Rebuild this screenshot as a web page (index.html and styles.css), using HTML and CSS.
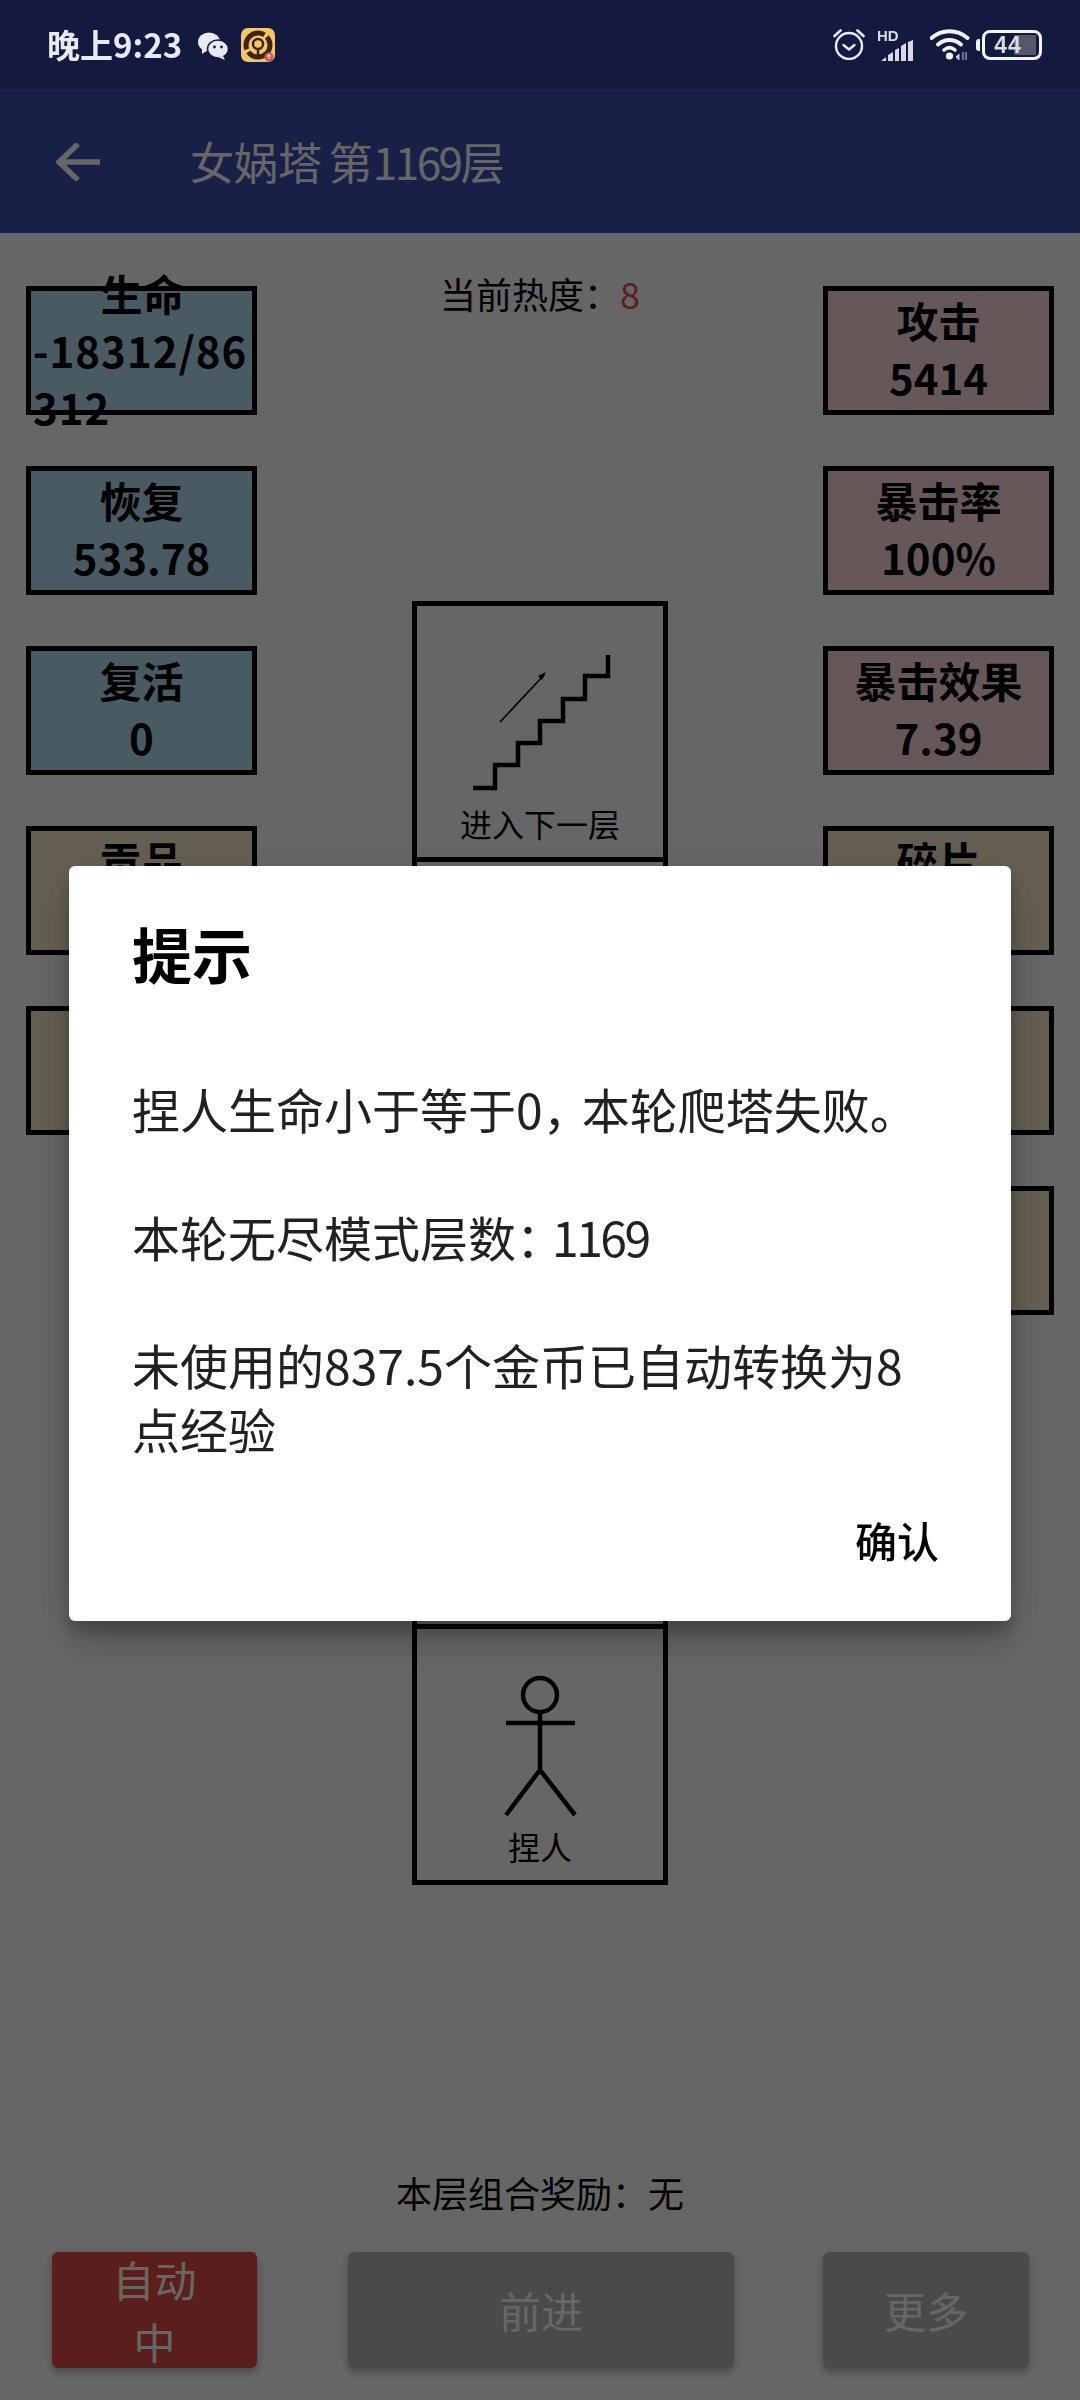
FILE: index.html
```html
<!DOCTYPE html>
<html lang="zh-CN">
<head>
    <meta charset="UTF-8">
    <meta name="viewport" content="width=device-width, initial-scale=1.0">
    <title>女娲塔</title>
    <link rel="stylesheet" href="styles.css">
</head>
<body>
    <div class="page">
        <div class="status-bar">
            <div class="status-content">
                <div class="status-left">
                    <span class="status-time">晚上9:23</span>
                    <svg class="icon-wechat" width="32" height="28" viewBox="0 0 32 28">
                        <ellipse cx="12" cy="10" rx="11" ry="9.5" fill="#e8eaf2"/>
                        <path d="M5 16 L5 22 L11 18 Z" fill="#e8eaf2"/>
                        <ellipse cx="21" cy="17" rx="10.5" ry="9" fill="#e8eaf2" stroke="#131940" stroke-width="1.5"/>
                        <path d="M26 24 L28 28 L21 25 Z" fill="#e8eaf2"/>
                        <circle cx="17.5" cy="15" r="1.4" fill="#131940"/>
                        <circle cx="24.5" cy="15" r="1.4" fill="#131940"/>
                    </svg>
                    <svg class="icon-app" width="34" height="34" viewBox="0 0 34 34">
                        <rect width="34" height="34" rx="7" fill="#f7c766"/>
                        <circle cx="17" cy="17" r="12" fill="none" stroke="#3d2410" stroke-width="5" stroke-dasharray="30 3"/>
                        <circle cx="17" cy="16" r="5" fill="none" stroke="#3d2410" stroke-width="2.5"/>
                        <path d="M17 21 V27" stroke="#3d2410" stroke-width="2.5"/>
                        <circle cx="28" cy="29" r="4.5" fill="#c9574a"/>
                        <path d="M28 26.5 V31 M26 28.5 L28 26.5 L30 28.5" stroke="#fff" stroke-width="1" fill="none"/>
                    </svg>
                </div>
                <div class="status-right">
                    <svg class="icon-alarm" width="32" height="32" viewBox="0 0 32 32">
                        <circle cx="16" cy="18" r="13" fill="none" stroke="#e8eaf2" stroke-width="2.4"/>
                        <path d="M10.5 17 L16 21.5 L21.5 17" fill="none" stroke="#e8eaf2" stroke-width="2.4" stroke-linecap="round" stroke-linejoin="round"/>
                        <path d="M1.5 8 L7.5 2.5 M30.5 8 L24.5 2.5" stroke="#e8eaf2" stroke-width="2.6" stroke-linecap="round"/>
                    </svg>
                    <div class="signal">
                        <span class="signal-hd">HD</span>
                        <svg class="signal-bars" width="32" height="21" viewBox="0 0 32 21">
                            <path d="M0 21 L5 17 V21 Z M7 21 V15 L12 12 V21 Z M14 21 V10 L18 8 V21 Z M20 21 V6 L25 3 V21 Z M27 21 V2 L32 0 V21 Z" fill="#d8dae4"/>
                        </svg>
                    </div>
                    <svg class="icon-wifi" width="40" height="32" viewBox="0 0 40 32">
                        <path d="M1.5 9 C12 0 27 0 37.5 9" fill="none" stroke="#f2f3f8" stroke-width="4" stroke-linecap="round"/>
                        <path d="M8 15.5 C15 9.5 24 9.5 31 15.5" fill="none" stroke="#f2f3f8" stroke-width="4" stroke-linecap="round"/>
                        <path d="M14 21 C17.5 18 21.5 18 25 21" fill="none" stroke="#f2f3f8" stroke-width="3.5" stroke-linecap="round"/>
                        <circle cx="19.5" cy="27" r="3.6" fill="#f2f3f8"/>
                        <path d="M29 25 L26 28 L29 31 Z M33 23 V31 M36 23 V31" fill="#c9ccd8" stroke="#c9ccd8" stroke-width="1"/>
                    </svg>
                    <div class="battery">
                        <span class="battery-cap"></span>
                        <div class="battery-body">
                            <span class="battery-fill"></span>
                            <span class="battery-text">44</span>
                        </div>
                    </div>
                </div>
            </div>
        </div>

        <div class="app-bar">
            <svg class="back-icon" width="44" height="38" viewBox="0 0 44 38">
                <path d="M44 19 H3 M22 1 L3 19 L22 37" fill="none" stroke="#fff" stroke-width="5.5"/>
            </svg>
            <span class="app-title">女娲塔 第<span class="narrow-num">1169</span>层</span>
        </div>

        <div class="main">
            <div class="stat-col">
                <div class="stat stat-blue stat-wide">
                    <div>生命</div>
                    <div class="stat-long">-18312/86312</div>
                </div>
                <div class="stat stat-blue">
                    <div>恢复</div>
                    <div>533.78</div>
                </div>
                <div class="stat stat-blue">
                    <div>复活</div>
                    <div>0</div>
                </div>
                <div class="stat stat-tan">
                    <div>贡品</div>
                    <div>0</div>
                </div>
                <div class="stat stat-tan"></div>
            </div>

            <div class="center-col">
                <div class="heat">当前热度：<span class="heat-value">8</span></div>
                <div class="tile">
                    <svg class="tile-icon" width="150" height="150" viewBox="0 0 150 150">
                        <path d="M8 138 H30 V115 H53 V93 H75 V71 H98 V49 H120 V26 H143 V5" fill="none" stroke="#000" stroke-width="4.5"/>
                        <path d="M35 72 L79 25" fill="none" stroke="#000" stroke-width="1.6"/>
                        <path d="M81 22 L73 26 L77 30 Z" fill="#000"/>
                    </svg>
                    <div class="tile-label">进入下一层</div>
                </div>
                <div class="tile"></div>
                <div class="tile"></div>
                <div class="tile"></div>
                <div class="tile">
                    <svg class="tile-icon" width="150" height="150" viewBox="0 0 150 150">
                        <circle cx="75" cy="22" r="17" fill="none" stroke="#000" stroke-width="4.5"/>
                        <path d="M75 39 V97 M41 50 H110 M75 97 L41 142 M75 97 L110 142" fill="none" stroke="#000" stroke-width="4.5"/>
                    </svg>
                    <div class="tile-label">捏人</div>
                </div>
            </div>

            <div class="stat-col">
                <div class="stat stat-red">
                    <div>攻击</div>
                    <div>5414</div>
                </div>
                <div class="stat stat-red">
                    <div>暴击率</div>
                    <div>100%</div>
                </div>
                <div class="stat stat-red">
                    <div>暴击效果</div>
                    <div>7.39</div>
                </div>
                <div class="stat stat-tan">
                    <div>碎片</div>
                    <div>0</div>
                </div>
                <div class="stat stat-tan"></div>
                <div class="stat stat-tan"></div>
            </div>
        </div>

        <div class="footer">
            <div class="combo">本层组合奖励：无</div>
            <div class="actions">
                <button class="btn btn-auto">自动中</button>
                <button class="btn btn-next">前进</button>
                <button class="btn btn-more">更多</button>
            </div>
        </div>
    </div>

    <!-- 提示 dialog -->
    <div class="overlay">
        <div class="dialog">
            <div class="dialog-title">提示</div>
            <div class="dialog-text">
                捏人生命小于等于0<span class="tight-comma">，</span>本轮爬塔失败。<br><br>
                本轮无尽模式层数<span class="tight-colon">：</span><span class="narrow-num">1169</span><br><br>
                未使用的837.5个金币已自动转换为8点经验
            </div>
            <div class="dialog-actions">
                <button class="dialog-btn">确认</button>
            </div>
        </div>
    </div>
</body>
</html>
```

FILE: styles.css
```css
* {
    box-sizing: border-box;
}

body {
    font-family: "Noto Sans CJK SC", "Noto Sans", sans-serif;
    margin: 0;
    padding: 0;
    background-color: #fff;
    color: #000;
}

button {
    font-family: inherit;
    border: none;
    padding: 0;
    background: none;
}

.page {
    display: flex;
    flex-direction: column;
    height: 2400px;
    overflow: hidden;
}

/* Status bar */
.status-bar {
    height: 89px;
    flex-shrink: 0;
    background-color: #303f9f;
}

.status-content {
    position: relative;
    z-index: 3;
    display: flex;
    justify-content: space-between;
    height: 89px;
    padding: 28px 38px 0 47px;
}

.status-left {
    display: flex;
    align-items: flex-start;
}

.status-time {
    font-size: 33px;
    line-height: 32px;
    font-weight: 700;
    color: #e8eaf2;
}

.icon-wechat {
    margin: 4px 0 0 15px;
}

.icon-app {
    margin-left: 12px;
}

.status-right {
    display: flex;
    align-items: flex-start;
}

.signal {
    position: relative;
    width: 36px;
    height: 28px;
    margin: 2px 0 0 12px;
}

.signal-hd {
    position: absolute;
    left: 0;
    top: -1px;
    font-family: "Liberation Sans", sans-serif;
    font-size: 15px;
    line-height: 13px;
    font-weight: 700;
    color: #d8dae4;
}

.signal-bars {
    position: absolute;
    right: 0;
    bottom: -3px;
}

.icon-wifi {
    margin: 1px 0 0 17px;
}

.battery {
    display: flex;
    align-items: center;
    height: 30px;
    margin: 2px 0 0 6px;
}

.battery-cap {
    width: 4px;
    height: 12px;
    margin-right: 2px;
    border-radius: 3px 0 0 3px;
    background-color: #f2f3f8;
}

.battery-body {
    position: relative;
    display: flex;
    align-items: center;
    justify-content: center;
    width: 60px;
    height: 30px;
    border: 3px solid #f2f3f8;
    border-radius: 8px;
}

.battery-fill {
    position: absolute;
    left: 29px;
    top: 2px;
    bottom: 2px;
    right: 3px;
    background-color: #55586a;
}

.battery-text {
    position: relative;
    font-family: "Liberation Sans", sans-serif;
    font-size: 23px;
    line-height: 24px;
    font-weight: 700;
    letter-spacing: 1px;
    margin-right: 8px;
    color: #d9dbe6;
}

/* App bar */
.app-bar {
    display: flex;
    align-items: center;
    height: 144px;
    flex-shrink: 0;
    padding-left: 56px;
    background-color: #3f51b5;
    color: #fff;
}

.back-icon {
    margin: 2px 90px 0 0;
}

.app-title {
    font-size: 44px;
    word-spacing: -3px;
}

.narrow-num {
    letter-spacing: -2.5px;
}

/* Main area */
.main {
    display: flex;
    justify-content: space-between;
    flex: 1;
    min-height: 0;
    padding: 0 26px;
}

.stat-col {
    display: flex;
    flex-direction: column;
    gap: 51px;
    width: 231px;
    padding-top: 53px;
}

.stat {
    display: flex;
    flex-direction: column;
    justify-content: center;
    height: 129px;
    padding: 0 3px 6px;
    border: 5px solid #000;
    font-size: 42px;
    line-height: 57px;
    font-weight: 700;
    text-align: center;
}

.stat-wide {
    padding: 0 0 2px 2px;
}

.stat-long {
    text-align: left;
    word-break: break-all;
    letter-spacing: 1px;
}

.stat-blue {
    background-color: #b9e1f7;
}

.stat-red {
    background-color: #ffdcdc;
}

.stat-tan {
    background-color: #fdedcd;
}

.center-col {
    display: flex;
    flex-direction: column;
    align-items: center;
    width: 256px;
    padding-top: 35px;
}

.heat {
    font-size: 36px;
    line-height: 50px;
    margin-bottom: 283px;
    white-space: nowrap;
}

.heat-value {
    color: #d9534a;
}

.tile {
    display: flex;
    flex-direction: column;
    align-items: center;
    width: 256px;
    height: 261px;
    flex-shrink: 0;
    margin-bottom: -5.25px;
    padding-top: 44px;
    border: 5px solid #000;
}

.tile-label {
    margin-top: 1px;
    font-size: 32px;
    line-height: 44px;
}

/* Footer */
.footer {
    flex-shrink: 0;
    padding-bottom: 32px;
}

.combo {
    font-size: 36px;
    line-height: 50px;
    text-align: center;
    margin-bottom: 35px;
}

.actions {
    display: flex;
    padding-left: 52px;
}

.btn {
    height: 116px;
    padding: 0 48px;
    border-radius: 6px;
    font-size: 42px;
    line-height: 62px;
    color: #fff;
    background-color: #bababa;
    box-shadow: 0 4px 8px rgba(0, 0, 0, 0.3);
}

.btn-auto {
    display: flex;
    align-items: center;
    justify-content: center;
    width: 205px;
    background-color: #e14e46;
}

.btn-next {
    width: 386px;
    margin-left: 91px;
}

.btn-more {
    width: 206px;
    margin-left: 89px;
}

/* Dialog */
.overlay {
    position: fixed;
    z-index: 2;
    left: 0;
    top: 0;
    display: flex;
    align-items: center;
    justify-content: center;
    width: 100%;
    height: 2400px;
    padding-top: 87px;
    background-color: rgba(0, 0, 0, 0.6);
}

.dialog {
    width: 942px;
    padding: 45px 65px 39px 63px;
    background-color: #fff;
    border-radius: 6px;
    box-shadow: 0 24px 38px rgba(0, 0, 0, 0.14), 0 9px 46px rgba(0, 0, 0, 0.12), 0 11px 15px rgba(0, 0, 0, 0.2);
}

.dialog-title {
    font-size: 60px;
    line-height: 84px;
    font-weight: 700;
    margin-bottom: 81px;
}

.dialog-text {
    font-size: 48px;
    line-height: 64px;
    color: #212121;
}

.tight-comma {
    letter-spacing: -9px;
}

.tight-colon {
    letter-spacing: -12px;
}

.dialog-actions {
    display: flex;
    justify-content: flex-end;
    margin-top: 38px;
}

.dialog-btn {
    margin-right: 7px;
    font-size: 42px;
    line-height: 84px;
    font-weight: 500;
    color: #000;
}
```
